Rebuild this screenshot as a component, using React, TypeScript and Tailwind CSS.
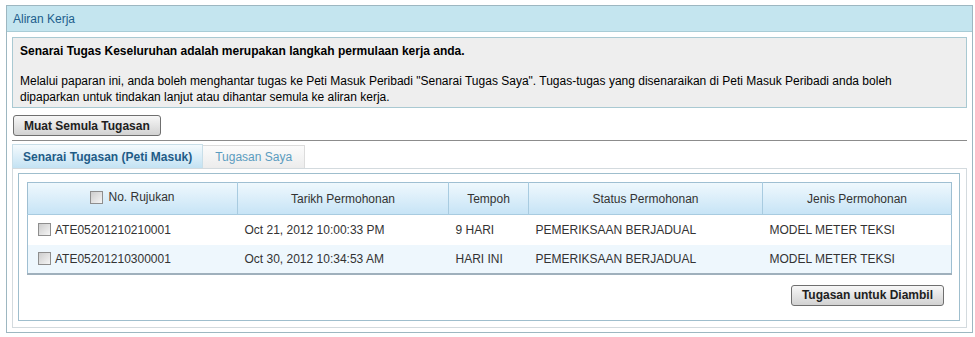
import React from "react";

interface Task {
  ref: string;
  date: string;
  tempoh: string;
  status: string;
  jenis: string;
}

const tasks: Task[] = [
  {
    ref: "ATE05201210210001",
    date: "Oct 21, 2012 10:00:33 PM",
    tempoh: "9 HARI",
    status: "PEMERIKSAAN BERJADUAL",
    jenis: "MODEL METER TEKSI",
  },
  {
    ref: "ATE05201210300001",
    date: "Oct 30, 2012 10:34:53 AM",
    tempoh: "HARI INI",
    status: "PEMERIKSAAN BERJADUAL",
    jenis: "MODEL METER TEKSI",
  },
];

function Check() {
  return (
    <span className="inline-block w-[13px] h-[13px] shrink-0 border border-[#8e8e8e] bg-linear-to-br from-[#cdcdcd] to-[#f5f5f5]" />
  );
}

function Button({ label }: { label: string }) {
  return (
    <button className="block h-[21px] px-[10px] rounded-[3px] border border-[#6f6f6f] bg-linear-to-b from-[#f7f7f7] to-[#d2d2d2] text-[12px] font-bold text-[#1e1e1e] leading-none">
      {label}
    </button>
  );
}

export default function App() {
  return (
    <div
      className="w-[975px] h-[337px] bg-white pt-[5px] pl-[6px] overflow-hidden"
      style={{ fontFamily: '"Liberation Sans", Arial, sans-serif' }}
    >
      <div className="w-[967px] border border-[#9db7c1] bg-white">
        {/* Panel header */}
        <div className="h-[26px] bg-[#c4e5ef] border-b border-[#a9ccd6] flex items-center pl-[6px]">
          <span className="text-[12px] text-[#1d5d8c]">Aliran Kerja</span>
        </div>

        <div className="px-[5px] pt-[5px] pb-[4px]">
          {/* Info box */}
          <div className="border border-[#a9c9d2] bg-[#eeeeee] pl-[7px] pt-[5px] pb-[2px] text-[12px] leading-[16px] text-black">
            <p className="font-bold">
              Senarai Tugas Keseluruhan adalah merupakan langkah permulaan kerja anda.
            </p>
            <p className="mt-[14px] whitespace-nowrap">
              Melalui paparan ini, anda boleh menghantar tugas ke Peti Masuk Peribadi "Senarai Tugas Saya". Tugas-tugas yang disenaraikan di Peti Masuk Peribadi anda boleh
              <br />
              dipaparkan untuk tindakan lanjut atau dihantar semula ke aliran kerja.
            </p>
          </div>

          <div className="mt-[7px] pl-[1px] flex">
            <Button label="Muat Semula Tugasan" />
          </div>

          <div className="mt-[4px] border-t border-[#8c8c8c]" />

          {/* Tabs */}
          <div className="mt-[3px] flex items-end h-[24px]">
            <div className="h-[24px] px-[10px] flex items-center border border-b-0 border-[#c9dfe9] bg-linear-to-b from-[#f4fafd] to-[#c3e2f3] text-[12px] font-bold text-[#1f5c87]">
              Senarai Tugasan (Peti Masuk)
            </div>
            <div className="h-[23px] px-[12px] flex items-center border border-b-0 border-l-0 border-[#dcdcdc] bg-linear-to-b from-[#fbfbfb] to-[#ececec] text-[12px] text-[#5b9cc0]">
              Tugasan Saya
            </div>
          </div>

          {/* Tab content */}
          <div className="border border-[#d3dade] pt-[4px] pl-[5px] pr-[6px] pb-[6px]">
            <div className="border border-[#9fbecd] px-[8px] pt-[8px] pb-[14px]">
              <table className="w-[924px] table-fixed border-collapse border border-[#9fbfd2] border-b-2 border-b-[#9fb0bc] text-[12px] text-[#333333]">
                <colgroup>
                  <col className="w-[210px]" />
                  <col className="w-[211px]" />
                  <col className="w-[80px]" />
                  <col className="w-[234px]" />
                  <col className="w-[189px]" />
                </colgroup>
                <thead>
                  <tr className="h-[32px] bg-linear-to-b from-[#eff8fd] to-[#c7e4f6] border-b border-[#a8cbe0]">
                    <th className="font-normal border-r border-[#a8cbe0]">
                      <span className="inline-flex items-center gap-[5px]">
                        <Check />
                        No. Rujukan
                      </span>
                    </th>
                    <th className="font-normal border-r border-[#a8cbe0]">Tarikh Permohonan</th>
                    <th className="font-normal border-r border-[#a8cbe0]">Tempoh</th>
                    <th className="font-normal border-r border-[#a8cbe0]">Status Permohonan</th>
                    <th className="font-normal">Jenis Permohonan</th>
                  </tr>
                </thead>
                <tbody>
                  {tasks.map((t, i) => (
                    <tr
                      key={t.ref}
                      className={i % 2 === 0 ? "h-[30px] bg-white" : "h-[29px] bg-[#eef7fd]"}
                    >
                      <td className="pl-[10px]">
                        <span className="flex items-center gap-[4px]">
                          <Check />
                          {t.ref}
                        </span>
                      </td>
                      <td className="pl-[7px]">{t.date}</td>
                      <td className="pl-[7px]">{t.tempoh}</td>
                      <td className="pl-[7px]">{t.status}</td>
                      <td className="pl-[7px]">{t.jenis}</td>
                    </tr>
                  ))}
                </tbody>
              </table>

              <div className="mt-[10px] flex justify-end pr-[7px]">
                <Button label="Tugasan untuk Diambil" />
              </div>
            </div>
          </div>
        </div>
      </div>
    </div>
  );
}
